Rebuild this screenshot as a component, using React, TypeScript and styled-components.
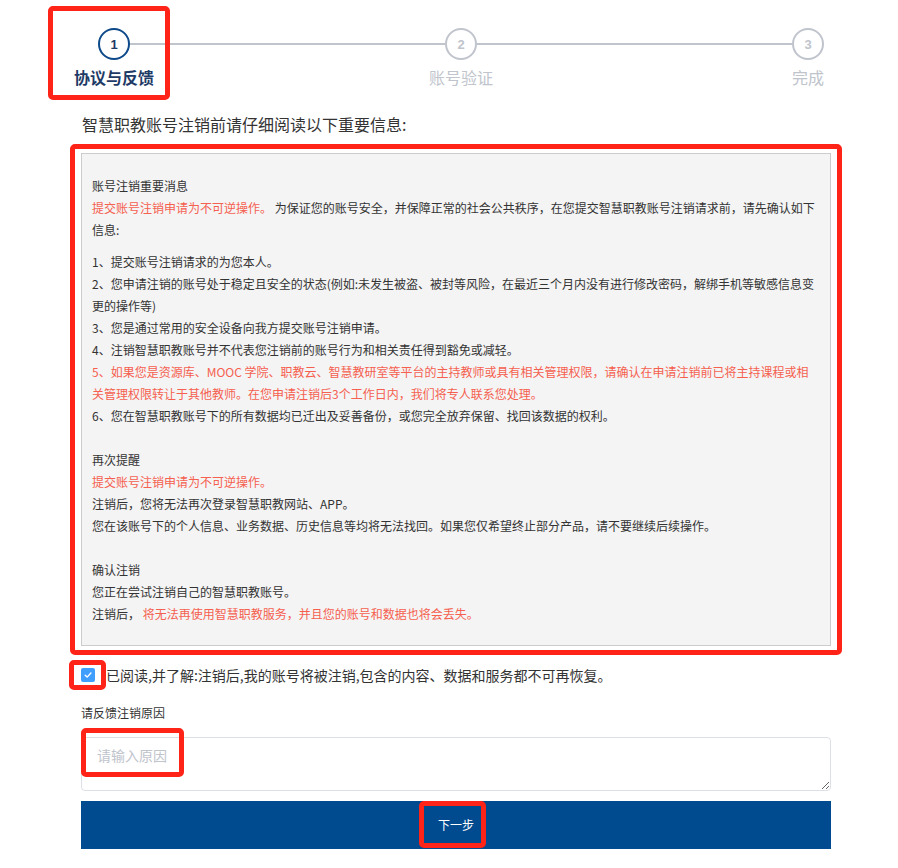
import React from "react";
import styled, { createGlobalStyle } from "styled-components";

const GlobalStyle = createGlobalStyle`
  html, body { margin: 0; padding: 0; background: #fff; }
  body {
    font-family: "Noto Sans CJK SC", "Noto Sans", sans-serif;
    color: #333;
  }
`;

const Page = styled.div`
  width: 750px;
  padding: 28px 0 20px 81px;
`;

const Mark = styled.span`
  position: absolute;
  box-sizing: border-box;
  border: 5px solid #ff2318;
  border-radius: 5px;
  pointer-events: none;
`;

/* ---------- steps ---------- */
const StepsBar = styled.div`
  position: relative;
  margin: 0 7px 0 17px;
`;

const StepMark = styled(Mark)`
  left: -50px;
  top: -22px;
  width: 122px;
  height: 94px;
`;

const Track = styled.div`
  display: flex;
  align-items: center;
`;

const Circle = styled.div<{ $active: boolean }>`
  box-sizing: border-box;
  width: 32px;
  height: 32px;
  border-radius: 50%;
  border: 2px solid ${(p) => (p.$active ? "#0e4a8a" : "#c0c4cc")};
  color: ${(p) => (p.$active ? "#1e3a66" : "#c0c4cc")};
  display: flex;
  align-items: center;
  justify-content: center;
  font: bold 13px "Liberation Sans", Arial, sans-serif;
`;

const Connector = styled.div`
  flex: 1;
  height: 2px;
  background: #c0c4cc;
`;

const Labels = styled.div`
  display: flex;
  margin-top: 6px;
`;

const LabelCell = styled.div<{ $active: boolean }>`
  width: 32px;
  display: flex;
  justify-content: center;
  white-space: nowrap;
  font-size: 16px;
  line-height: 22px;
  font-weight: ${(p) => (p.$active ? 700 : 400)};
  color: ${(p) => (p.$active ? "#1e3a66" : "#c0c4cc")};
`;

const LabelSpacer = styled.div`
  flex: 1;
`;

/* ---------- notice ---------- */
const Heading = styled.h2`
  margin: 25px 0 0 1px;
  font-size: 16px;
  line-height: 22px;
  font-weight: 400;
  color: #333;
`;

const Highlight = styled.div`
  margin: 9px -11px 0;
  border: 5px solid #ff2318;
  border-radius: 5px;
  padding: 4px 6px;
`;

const Notice = styled.div`
  background: #f4f4f4;
  border: 1px solid #cccccc;
  padding: 21px 10px 20px 10px;
  font-size: 12px;
  line-height: 22px;
  color: #333;
`;

const Block = styled.div<{ $gap: number }>`
  margin-top: ${(p) => p.$gap}px;
`;

const Line = styled.p`
  margin: 0;
`;

const Red = styled.span`
  color: #f5604f;
`;

/* ---------- agreement ---------- */
const AgreeRow = styled.label`
  position: relative;
  display: flex;
  align-items: center;
  gap: 11px;
  margin-top: 9px;
  font-size: 14px;
  line-height: 22px;
  color: #333;
`;

const CheckMark = styled(Mark)`
  left: -12px;
  top: -4px;
  width: 37px;
  height: 30px;
`;

const CheckBox = styled.span`
  width: 14px;
  height: 14px;
  border-radius: 2px;
  background: #409eff;
  display: flex;
  align-items: center;
  justify-content: center;
  flex: none;
`;

const FieldLabel = styled.div`
  margin-top: 17px;
  font-size: 12px;
  line-height: 20px;
  color: #333;
`;

const Field = styled.div`
  position: relative;
  margin-top: 14px;
`;

const FieldMark = styled(Mark)`
  left: 0;
  top: -9px;
  width: 103px;
  height: 49px;
`;

const TextArea = styled.textarea`
  display: block;
  box-sizing: border-box;
  width: 100%;
  height: 54px;
  margin: 0;
  padding: 7px 15px;
  border: 1px solid #dcdfe6;
  border-radius: 4px;
  font-family: "Noto Sans CJK SC", "Noto Sans", sans-serif;
  font-size: 14px;
  line-height: 20px;
  color: #606266;
  outline: none;
  &::placeholder {
    color: #c0c4cc;
  }
`;

const NextButton = styled.button`
  position: relative;
  display: flex;
  align-items: center;
  justify-content: center;
  width: 100%;
  height: 48px;
  margin-top: 10px;
  border: none;
  background: #004a8f;
  color: #fff;
  font-family: "Noto Sans CJK SC", "Noto Sans", sans-serif;
  font-size: 12px;
  line-height: 20px;
  cursor: pointer;
`;

const ButtonMark = styled(Mark)`
  left: calc(50% - 37px);
  top: 0;
  width: 67px;
  height: 47px;
`;

const steps = ["协议与反馈", "账号验证", "完成"];

export default function App() {
  return (
    <>
      <GlobalStyle />
      <Page>
        <StepsBar>
          <Track>
            {steps.map((s, i) => (
              <React.Fragment key={s}>
                {i > 0 && <Connector />}
                <Circle $active={i === 0}>{i + 1}</Circle>
              </React.Fragment>
            ))}
          </Track>
          <Labels>
            {steps.map((s, i) => (
              <React.Fragment key={s}>
                {i > 0 && <LabelSpacer />}
                <LabelCell $active={i === 0}>{s}</LabelCell>
              </React.Fragment>
            ))}
          </Labels>
          <StepMark />
        </StepsBar>

        <Heading>智慧职教账号注销前请仔细阅读以下重要信息:</Heading>

        <Highlight>
          <Notice>
            <Block $gap={0}>
              <Line>账号注销重要消息</Line>
              <Line>
                <Red>提交账号注销申请为不可逆操作。</Red> 为保证您的账号安全，并保障正常的社会公共秩序，在您提交智慧职教账号注销请求前，请先确认如下信息:
              </Line>
            </Block>
            <Block $gap={10}>
              <Line>1、提交账号注销请求的为您本人。</Line>
              <Line>
                2、您申请注销的账号处于稳定且安全的状态(例如:未发生被盗、被封等风险，在最近三个月内没有进行修改密码，解绑手机等敏感信息变更的操作等)
              </Line>
              <Line>3、您是通过常用的安全设备向我方提交账号注销申请。</Line>
              <Line>4、注销智慧职教账号并不代表您注销前的账号行为和相关责任得到豁免或减轻。</Line>
              <Line>
                <Red>
                  5、如果您是资源库、MOOC 学院、职教云、智慧教研室等平台的主持教师或具有相关管理权限，请确认在申请注销前已将主持课程或相关管理权限转让于其他教师。在您申请注销后3个工作日内，我们将专人联系您处理。
                </Red>
              </Line>
              <Line>6、您在智慧职教账号下的所有数据均已迁出及妥善备份，或您完全放弃保留、找回该数据的权利。</Line>
            </Block>
            <Block $gap={22}>
              <Line>再次提醒</Line>
              <Line>
                <Red>提交账号注销申请为不可逆操作。</Red>
              </Line>
              <Line>注销后，您将无法再次登录智慧职教网站、APP。</Line>
              <Line>
                您在该账号下的个人信息、业务数据、历史信息等均将无法找回。如果您仅希望终止部分产品，请不要继续后续操作。
              </Line>
            </Block>
            <Block $gap={22}>
              <Line>确认注销</Line>
              <Line>您正在尝试注销自己的智慧职教账号。</Line>
              <Line>
                注销后， <Red>将无法再使用智慧职教服务，并且您的账号和数据也将会丢失。</Red>
              </Line>
            </Block>
          </Notice>
        </Highlight>

        <AgreeRow>
          <CheckBox>
            <svg width="10" height="10" viewBox="0 0 10 10">
              <polyline
                points="2.2,5.2 4.2,7.1 7.9,3"
                fill="none"
                stroke="#fff"
                strokeWidth="1.4"
                strokeLinecap="round"
                strokeLinejoin="round"
              />
            </svg>
          </CheckBox>
          已阅读,并了解:注销后,我的账号将被注销,包含的内容、数据和服务都不可再恢复。
          <CheckMark />
        </AgreeRow>

        <FieldLabel>请反馈注销原因</FieldLabel>
        <Field>
          <TextArea placeholder="请输入原因" />
          <FieldMark />
        </Field>

        <NextButton type="button">
          下一步
          <ButtonMark />
        </NextButton>
      </Page>
    </>
  );
}
